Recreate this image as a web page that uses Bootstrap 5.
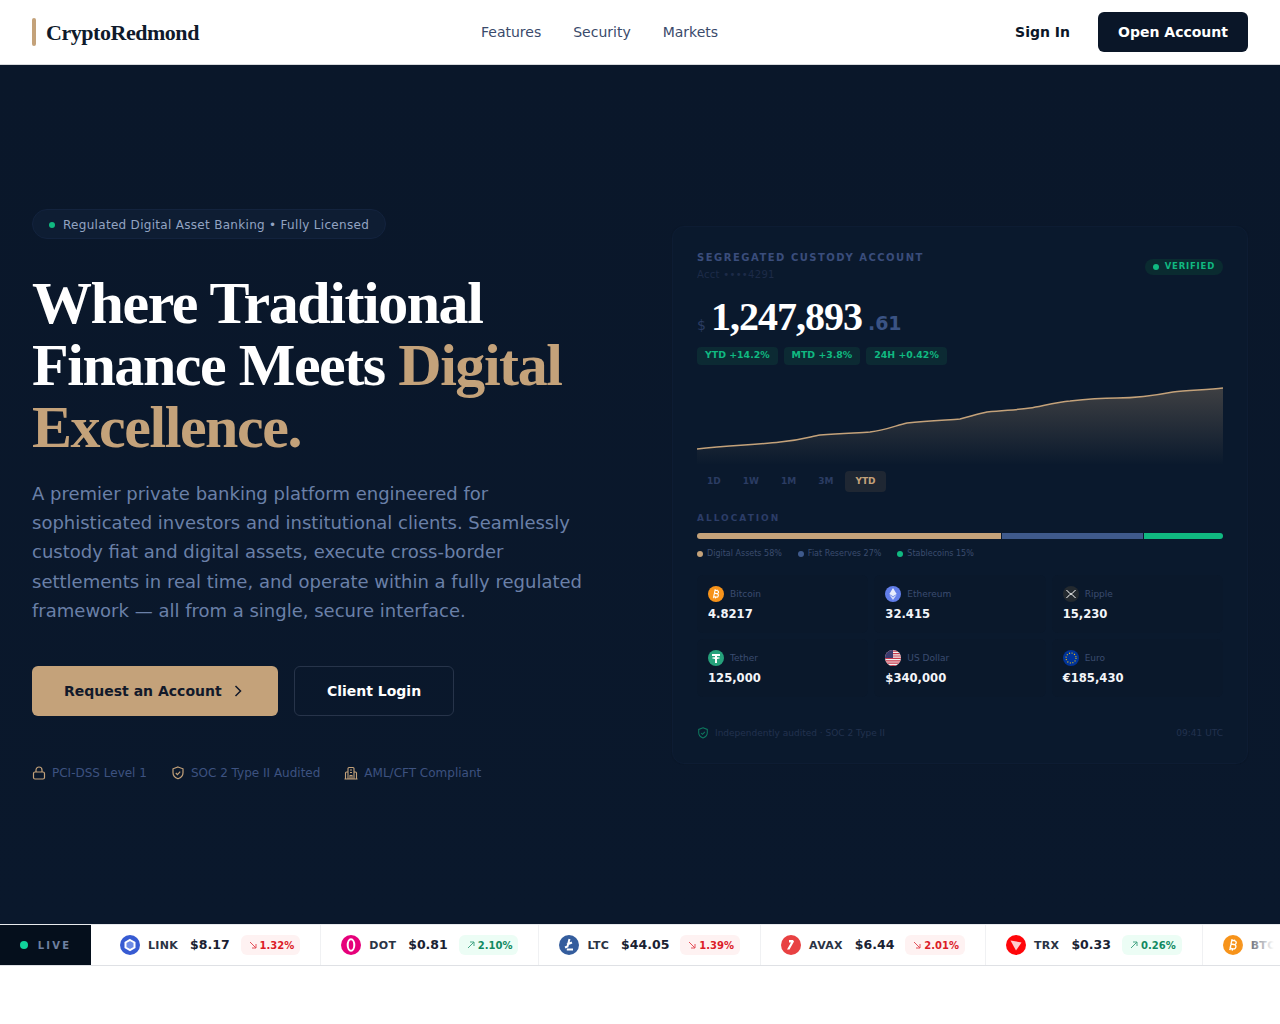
<!DOCTYPE html>
<html lang="en">
<head>
<meta charset="utf-8">
<title>CryptoRedmond</title>
<link href="https://cdn.jsdelivr.net/npm/bootstrap@5.3.0/dist/css/bootstrap.min.css" rel="stylesheet">
<style>
:root{--gold:#c4a27a;--ink:#0a1628;--serif:"Liberation Serif",serif;--sans:"DejaVu Sans",sans-serif}
html,body{height:100%}
body{font-family:var(--sans);background:#fff;color:var(--ink)}
.topbar{height:65px;padding:0 32px;background:#fff;border-bottom:1px solid #d8dadd}
.brandbar{width:4px;height:28px;background:var(--gold);border-radius:2px}
.brandname{font-family:var(--serif);font-weight:700;font-size:22px;letter-spacing:-.46px;color:#0f1a2b;margin-left:10px;text-decoration:none}
.toplinks{gap:32px;position:absolute;left:481px}
.toplinks a{font-size:14px;color:#3a4a6b;text-decoration:none}
.signin{font-size:14px;font-weight:700;color:var(--ink);text-decoration:none;margin-right:28px}
.openbtn{height:40px;width:150px;background:var(--ink);color:#fff;font-size:14px;font-weight:700;border-radius:6px;border:0}
.hero{height:859px;background:linear-gradient(180deg,#0a172a,#0a182c);padding:0 32px}
.herogrid{display:grid;grid-template-columns:1fr 1fr;column-gap:64px;align-items:center;width:100%}
.leftcol{padding-top:2px}
.pill{display:inline-flex;align-items:center;height:30px;width:354px;padding:2px 0 0 16px;gap:8px;border:1px solid #13233e;background:#0e1d33;border-radius:15px;font-size:12px;letter-spacing:.3px;color:#93a4c2}
.dotg{width:6px;height:6px;border-radius:50%;background:#10b981;flex:none}
.headline{font-family:var(--serif);font-weight:700;font-size:60px;line-height:62px;letter-spacing:-1.45px;color:#fff;margin:33px 0 0}
.headline em{font-style:normal;color:var(--gold)}
.intro{font-size:18px;line-height:29.25px;color:#6a80a8;margin:21px 0 0;max-width:560px}
.ctas{gap:16px;margin-top:41px}
.btn-req{width:246px;height:50px;background:var(--gold);color:#12192a;font-size:14px;font-weight:700;border:0;border-radius:6px;gap:12px;padding:0 0 0 32px}
.btn-login{width:160px;height:50px;background:transparent;color:#fff;font-size:14px;font-weight:700;border:1px solid #27344a;border-radius:6px}
.trust{gap:24px;margin-top:48px;font-size:12px;color:#3d5280}
.trust span{display:flex;align-items:center;gap:6px}
.custody{background:#0a192d;border:1px solid #0d1c33;border-radius:12px;padding:24px;height:538px;box-shadow:0 0 0 1px #0a1729}
.label1{font-size:10px;font-weight:700;letter-spacing:1.5px;color:#3a4d7c;line-height:14px}
.acct{font-size:10px;color:#1d2b48;letter-spacing:.3px;line-height:14px;margin-top:3px}
.verified{height:16px;padding:0 8px;display:flex;align-items:center;gap:6px;background:#0a2b30;border-radius:8px;font-size:8.5px;font-weight:700;letter-spacing:.8px;color:#10b981;margin-top:8px}
.dotv{width:6px;height:6px;border-radius:50%;background:#10b981}
.bal{margin-top:16px;height:38px;align-items:baseline}
.bal i{font-style:normal;font-size:14px;color:#2b3c63;margin-right:5px}
.bal b{font-family:var(--serif);font-size:40px;letter-spacing:-1px;color:#fff;line-height:38px}
.bal u{text-decoration:none;font-size:19px;font-weight:700;color:#3a5384;margin-left:6px}
.perf{gap:6px;margin-top:11px}
.perf span{height:18px;padding:0 8px;display:flex;align-items:center;background:#0c2a33;border-radius:4px;font-size:9.4px;font-weight:700;color:#10b981}
.chartbox{display:block;width:526px;height:85px;margin-top:15px}
.ranges{gap:2px;margin-top:6px}
.ranges span{height:21px;padding:2px 10px 0;display:flex;align-items:center;font-size:9px;font-weight:700;color:#2b3c63;border-radius:4px}
.ranges .on{background:#1f2733;color:#c4a27a}
.label2{font-size:9px;font-weight:700;letter-spacing:2px;color:#2c3d68;margin-top:20px;line-height:12px}
.allocbar{height:6px;border-radius:3px;overflow:hidden;gap:1px;margin-top:9px}
.seg{height:6px}
.legend{gap:16px;margin-top:11px;font-size:8px;color:#3a4c6e;line-height:8px}
.legend span{display:flex;align-items:center;gap:4px}
.legdot{width:6px;height:6px;border-radius:50%;flex:none}
.assets{display:grid;grid-template-columns:repeat(3,1fr);gap:6px;margin-top:17px}
.asset{background:#0a182b;border-radius:6px;padding:11px;height:58px}
.assettop{display:flex;align-items:center;gap:6px;font-size:9px;color:#3b4c70;height:16px}
.assetname{padding-top:2px}
.assetval{font-size:11.6px;font-weight:700;color:#f3f5f9;line-height:16px;margin-top:4px}
.cardfoot{margin-top:30px;font-size:9px;color:#22324f}
.footrow{gap:6px}
.ticker{height:40px;background:#fff;overflow:hidden;position:relative}
.tickerwrap{border-bottom:1px solid #dfe1e5;border-top:1px solid #e8eaed;height:42px}
.livebox{width:91px;flex:none;background:#050f1c;gap:10px;font-size:10px;font-weight:700;letter-spacing:2.2px;color:#6f80a0;height:100%;position:relative;z-index:1}
.dotl{width:8px;height:8px;border-radius:50%;background:#10d39a}
.track{flex:none;margin-left:9px;height:100%}
.tick{display:flex;align-items:center;height:100%;padding:0 20px;border-right:1px solid #f0f1f3;flex:none}
.sym{font-size:11px;font-weight:700;letter-spacing:.3px;color:#2a3344;margin-left:8px;padding-top:2px}
.price{font-size:12.5px;font-weight:700;color:#1a2232;margin-left:12px}
.chg{height:20px;padding:0 6px 0 8px;margin-left:11px;display:flex;align-items:center;gap:3px;border-radius:6px;font-size:10px;font-weight:700}
.chg svg{opacity:.75}
.chg.dn{background:#fef2f2;color:#dc1c28}
.chg.up{background:#ecfdf5;color:#118a62}
.tickfade{position:absolute;right:0;top:0;width:40px;height:100%;background:linear-gradient(90deg,rgba(255,255,255,0),#fff 85%)}
</style>
</head>
<body>
<nav class="topbar d-flex align-items-center justify-content-between position-relative">
  <div class="d-flex align-items-center"><span class="brandbar"></span><a class="brandname" href="#">CryptoRedmond</a></div>
  <div class="toplinks d-flex"><a href="#">Features</a><a href="#">Security</a><a href="#">Markets</a></div>
  <div class="d-flex align-items-center"><a class="signin" href="#">Sign In</a><button class="openbtn">Open Account</button></div>
</nav>

<section class="hero d-flex align-items-center">
  <div class="herogrid">
    <div class="leftcol">
      <div class="pill"><span class="dotg"></span>Regulated Digital Asset Banking • Fully Licensed</div>
      <h1 class="headline">Where Traditional<br>Finance Meets <em>Digital<br>Excellence.</em></h1>
      <p class="intro">A premier private banking platform engineered for sophisticated investors and institutional clients. Seamlessly custody fiat and digital assets, execute cross-border settlements in real time, and operate within a fully regulated framework — all from a single, secure interface.</p>
      <div class="ctas d-flex">
        <button class="btn-req d-flex align-items-center">Request an Account
          <svg width="8" height="12" viewBox="0 0 8 12" fill="none" stroke="#12192a" stroke-width="1.500"><path d="M1.500 1l5 5-5 5"/></svg></button>
        <button class="btn-login">Client Login</button>
      </div>
      <div class="trust d-flex">
        <span><svg width="14" height="14" viewBox="0 0 14 14" fill="none" stroke="#c4a27a" stroke-width="1.200"><rect x="1.500" y="6" width="11" height="7" rx="1.500"/><path d="M4 6V4a3 3 0 0 1 6 0v2"/></svg>PCI-DSS Level 1</span>
        <span><svg width="14" height="14" viewBox="0 0 14 14" fill="none" stroke="#c4a27a" stroke-width="1.200"><path d="M7 1l5 1.800v4c0 3-2.200 5-5 6-2.800-1-5-3-5-6v-4z"/><path d="M4.800 7l1.600 1.600 2.800-3"/></svg>SOC 2 Type II Audited</span>
        <span><svg width="14" height="14" viewBox="0 0 14 14" fill="none" stroke="#c4a27a" stroke-width="1.100"><path d="M4 13V2.500q0-1 1-1h4q1 0 1 1V13M4 6H2.500q-1 0-1 1v6M10 6h1.500q1 0 1 1v6M.5 13h13"/><path d="M6 4h2M6 6.500h2M6 13v-3.500h2V13"/></svg>AML/CFT Compliant</span>
      </div>
    </div>

    <div class="custody">
      <div class="d-flex justify-content-between">
        <div><div class="label1">SEGREGATED CUSTODY ACCOUNT</div><div class="acct">Acct ••••4291</div></div>
        <div class="verified"><span class="dotv"></span>VERIFIED</div>
      </div>
      <div class="bal d-flex"><i>$</i><b>1,247,893</b><u>.61</u></div>
      <div class="perf d-flex"><span>YTD +14.2%</span><span>MTD +3.8%</span><span>24H +0.42%</span></div>
      <svg class="chartbox" viewBox="0 0 526 85">
        <defs><linearGradient id="gf" x1="0" y1="0" x2="0" y2="1"><stop offset="0" stop-color="#c4a27a" stop-opacity=".28"/><stop offset="1" stop-color="#c4a27a" stop-opacity="0"/></linearGradient></defs>
        <path d="M0 69C30 65 60 65 83 62 105 60 115 56 123 55 145 53 160 53 173 52 190 50 200 45 210 43 230 41 250 40 263 39 275 36 280 34 290 32 310 30 320 30 333 28 345 26 360 22 373 21 390 19 405 18 420 18 435 18 450 17 476 12 490 10 510 10 526 8V85H0Z" fill="url(#gf)"/>
        <path d="M0 69C30 65 60 65 83 62 105 60 115 56 123 55 145 53 160 53 173 52 190 50 200 45 210 43 230 41 250 40 263 39 275 36 280 34 290 32 310 30 320 30 333 28 345 26 360 22 373 21 390 19 405 18 420 18 435 18 450 17 476 12 490 10 510 10 526 8" fill="none" stroke="#c4a27a" stroke-width="1.500"/>
      </svg>
      <div class="ranges d-flex"><span>1D</span><span>1W</span><span>1M</span><span>3M</span><span class="on">YTD</span></div>
      <div class="label2">ALLOCATION</div>
      <div class="allocbar d-flex">
        <div class="seg" style="width:58%;background:#c4a27a"></div>
        <div class="seg" style="width:27%;background:#3f5a8c"></div>
        <div class="seg" style="width:15%;background:#10b981"></div>
      </div>
      <div class="legend d-flex">
        <span><span class="legdot" style="background:#c4a27a"></span>Digital Assets 58%</span>
        <span><span class="legdot" style="background:#3f5a8c"></span>Fiat Reserves 27%</span>
        <span><span class="legdot" style="background:#10b981"></span>Stablecoins 15%</span>
      </div>
      <div class="assets">
        <div class="asset"><div class="assettop"><svg width="16" height="16" viewBox="0 0 16 16"><circle cx="8" cy="8" r="8" fill="#f7931a"/><path d="M6.300 4.500h2.500c1.800 0 1.800 3-.2 3H6.300zm0 3h2.800c2 0 2 3.500-.2 3.500H6.300zM6.300 3.500v9M8.300 3.500v1M8.300 11v1.500" fill="none" stroke="#fff" stroke-width="1.100" transform="rotate(12 8 8)"/></svg><span class="assetname">Bitcoin</span></div><div class="assetval">4.8217</div></div>
        <div class="asset"><div class="assettop"><svg width="16" height="16" viewBox="0 0 16 16"><circle cx="8" cy="8" r="8" fill="#627eea"/><path d="M8 2l3.700 6L8 10.200 4.300 8z" fill="#fff" fill-opacity=".85"/><path d="M8 11l3.700-2.200L8 14 4.300 8.800z" fill="#fff" fill-opacity=".7"/></svg><span class="assetname">Ethereum</span></div><div class="assetval">32.415</div></div>
        <div class="asset"><div class="assettop"><svg width="16" height="16" viewBox="0 0 16 16"><circle cx="8" cy="8" r="8" fill="#23292f"/><path d="M3.500 4C6 7 7 7.500 8 7.500S10 7 12.500 4M3.500 12C6 9 7 8.500 8 8.500S10 9 12.500 12" fill="none" stroke="#fff" stroke-width="1"/></svg><span class="assetname">Ripple</span></div><div class="assetval">15,230</div></div>
        <div class="asset"><div class="assettop"><svg width="16" height="16" viewBox="0 0 16 16"><circle cx="8" cy="8" r="8" fill="#26a17b"/><path d="M4 4h8v2H9v1.300c1.700.1 3 .4 3 .8s-1.300.7-3 .8V13H7V8.900c-1.700-.1-3-.4-3-.8s1.300-.7 3-.8V6H4z" fill="#fff"/></svg><span class="assetname">Tether</span></div><div class="assetval">125,000</div></div>
        <div class="asset"><div class="assettop"><svg width="16" height="16" viewBox="0 0 16 16"><defs><clipPath id="cu"><circle cx="8" cy="8" r="8"/></clipPath></defs><g clip-path="url(#cu)"><rect width="16" height="16" fill="#f2f2f2"/><path d="M0 1.200h16M0 3.600h16M0 6h16M0 8.400h16M0 10.800h16M0 13.200h16M0 15.600h16" stroke="#c8374a" stroke-width="1.200"/><rect width="8" height="8" fill="#3c3b6e"/></g></svg><span class="assetname">US Dollar</span></div><div class="assetval">$340,000</div></div>
        <div class="asset"><div class="assettop"><svg width="16" height="16" viewBox="0 0 16 16"><circle cx="8" cy="8" r="8" fill="#003399"/><circle cx="8" cy="8" r="5" fill="none" stroke="#ffcc00" stroke-width="1.100" stroke-dasharray="1 1.620"/></svg><span class="assetname">Euro</span></div><div class="assetval">€185,430</div></div>
      </div>
      <div class="cardfoot d-flex justify-content-between align-items-center">
        <span class="d-flex align-items-center footrow"><svg width="12" height="12" viewBox="0 0 14 14" fill="none" stroke="#10b981" stroke-opacity=".6" stroke-width="1.200"><path d="M7 1l5 1.800v4c0 3-2.200 5-5 6-2.800-1-5-3-5-6v-4z"/><path d="M4.800 7l1.600 1.600 2.800-3"/></svg><span>Independently audited · SOC 2 Type II</span></span>
        <span>09:41 UTC</span>
      </div>
    </div>
  </div>
</section>

<div class="tickerwrap">
<div class="ticker d-flex">
  <div class="livebox d-flex align-items-center justify-content-center"><span class="dotl"></span>LIVE</div>
  <div class="track d-flex">
    <div class="tick"><svg width="20" height="20" viewBox="0 0 20 20"><circle cx="10" cy="10" r="10" fill="#375bd2"/><path d="M10 5l4.500 2.500v5L10 15l-4.500-2.500v-5z" fill="#6d8be6" stroke="#fff" stroke-width="2"/></svg><span class="sym">LINK</span><span class="price">$8.17</span><span class="chg dn"><svg width="8" height="8" viewBox="0 0 8 8" fill="none" stroke="currentColor" stroke-width="1"><path d="M1 1l6 6M7 3v4H3"/></svg>1.32%</span></div>
    <div class="tick"><svg width="20" height="20" viewBox="0 0 20 20"><circle cx="10" cy="10" r="10" fill="#e6007a"/><ellipse cx="10" cy="10" rx="3.300" ry="5.800" fill="none" stroke="#fff" stroke-width="2"/></svg><span class="sym">DOT</span><span class="price">$0.81</span><span class="chg up"><svg width="8" height="8" viewBox="0 0 8 8" fill="none" stroke="currentColor" stroke-width="1"><path d="M1 7l6-6M3 1h4v4"/></svg>2.10%</span></div>
    <div class="tick"><svg width="20" height="20" viewBox="0 0 20 20"><circle cx="10" cy="10" r="10" fill="#345d9d"/><path d="M10.500 4l-2 7.500L6 12.500M8 9.500l5-2M7.800 14.500H14" fill="none" stroke="#fff" stroke-width="2"/></svg><span class="sym">LTC</span><span class="price">$44.05</span><span class="chg dn"><svg width="8" height="8" viewBox="0 0 8 8" fill="none" stroke="currentColor" stroke-width="1"><path d="M1 1l6 6M7 3v4H3"/></svg>1.39%</span></div>
    <div class="tick"><svg width="20" height="20" viewBox="0 0 20 20"><circle cx="10" cy="10" r="10" fill="#e84142"/><path d="M8 5h4l1 1.500-4.500 8H6L10 7.500H8z" fill="#fff"/></svg><span class="sym">AVAX</span><span class="price">$6.44</span><span class="chg dn"><svg width="8" height="8" viewBox="0 0 8 8" fill="none" stroke="currentColor" stroke-width="1"><path d="M1 1l6 6M7 3v4H3"/></svg>2.01%</span></div>
    <div class="tick"><svg width="20" height="20" viewBox="0 0 20 20"><circle cx="10" cy="10" r="10" fill="#ff060a"/><path d="M4.500 5.500l11 2-5.500 8z" fill="#fff" fill-opacity=".8"/></svg><span class="sym">TRX</span><span class="price">$0.33</span><span class="chg up"><svg width="8" height="8" viewBox="0 0 8 8" fill="none" stroke="currentColor" stroke-width="1"><path d="M1 7l6-6M3 1h4v4"/></svg>0.26%</span></div>
    <div class="tick"><svg width="20" height="20" viewBox="0 0 16 16"><circle cx="8" cy="8" r="8" fill="#f7931a"/><path d="M6.300 4.500h2.500c1.800 0 1.800 3-.2 3H6.300zm0 3h2.800c2 0 2 3.500-.2 3.500H6.300zM6.300 3.500v9M8.300 3.500v1M8.300 11v1.500" fill="none" stroke="#fff" stroke-width="1.100" transform="rotate(12 8 8)"/></svg><span class="sym">BTC</span></div>
  </div>
  <div class="tickfade"></div>
</div>
</div>
<script src="https://cdn.jsdelivr.net/npm/bootstrap@5.3.0/dist/js/bootstrap.bundle.min.js"></script>
</body>
</html>
